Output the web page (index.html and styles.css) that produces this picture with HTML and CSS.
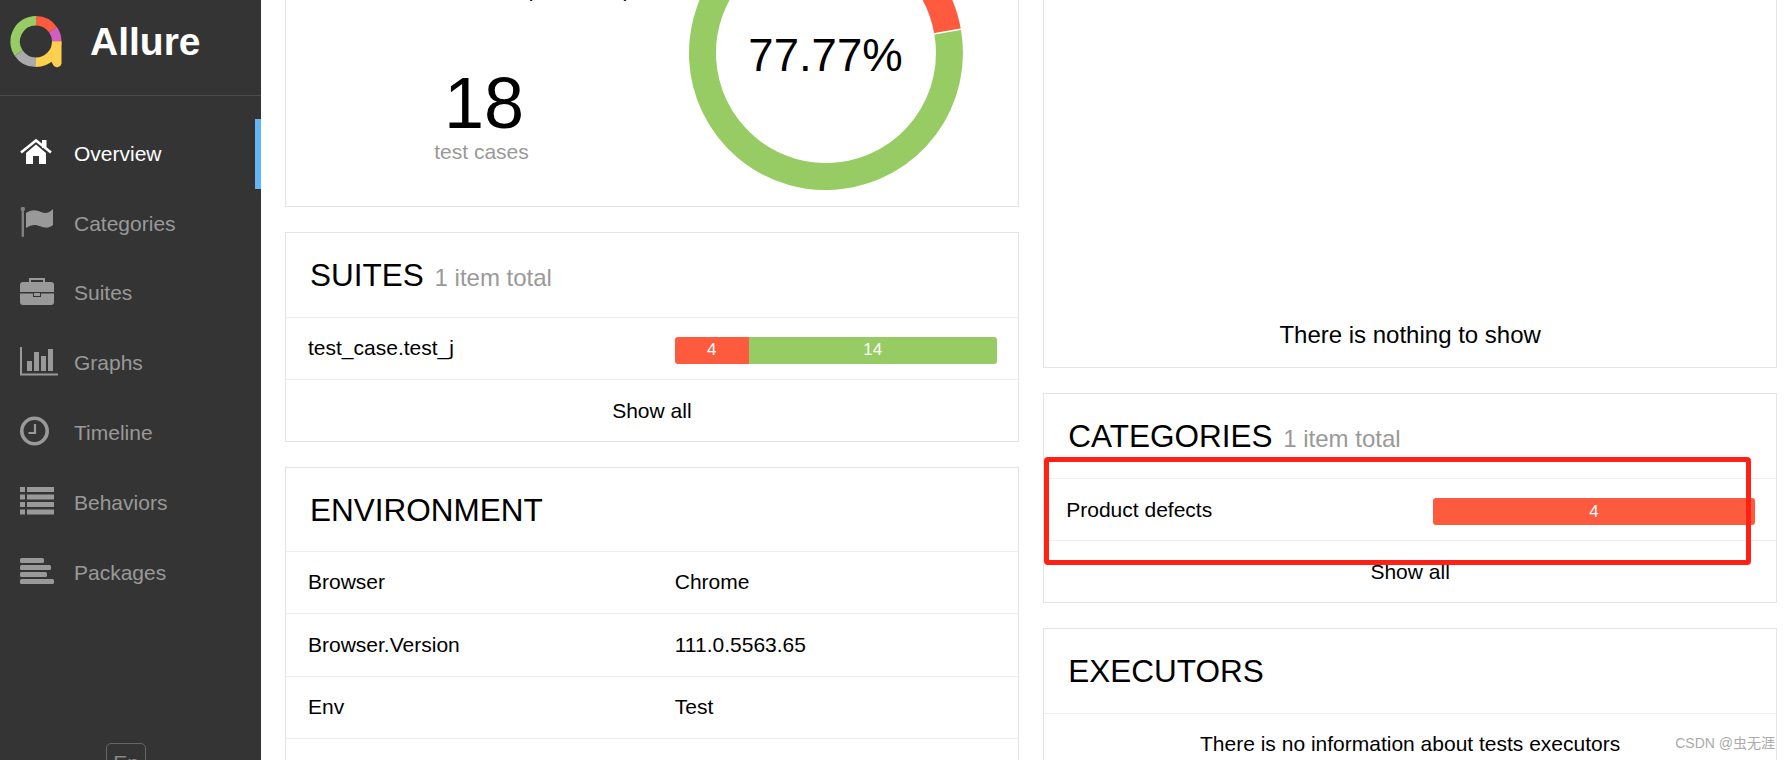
FILE: index.html
```html
<!DOCTYPE html>
<html lang="en">
<head>
    <meta charset="UTF-8">
    <meta name="viewport" content="width=device-width, initial-scale=1.0">
    <title>Allure Report</title>
    <link rel="stylesheet" href="styles.css">
</head>
<body>
    <aside class="sidebar">
        <div class="brand">
            <svg class="brand-logo" width="64" height="64" viewBox="0 0 64 64">
                <g fill="none" stroke-width="9.5">
                    <path d="M31 6.75A20.75 20.75 0 0 1 47.9 15.6" stroke="#fd5a3e"/>
                    <path d="M47.9 15.6A20.75 20.75 0 0 1 51.75 27.5" stroke="#d35ebe"/>
                    <path d="M51.75 27.5A20.75 20.75 0 0 1 31 48.25" stroke="#ffd050"/>
                    <path d="M31 48.25A20.75 20.75 0 0 1 13.6 39" stroke="#aaaaaa"/>
                    <path d="M13.6 39A20.75 20.75 0 0 1 31 6.75" stroke="#97cc64"/>
                </g>
                <path d="M47 27.5H56.5V49.5A4.5 4.5 0 0 1 48.5 51.5L46 47Z" fill="#ffd050"/>
            </svg>
            <span class="brand-name">Allure</span>
        </div>
        <nav class="nav">
            <a class="nav-item active" href="#">
                <svg class="nav-icon" width="34" height="28" viewBox="0 0 34 28">
                    <path d="M6 15L16 6.5L26 15V26H19V18H13V26H6Z" fill="currentColor"/>
                    <path d="M1 14.5L16 2.5L31 14.5" fill="none" stroke="currentColor" stroke-width="2.6"/>
                    <rect x="22" y="2" width="4.5" height="8" fill="currentColor"/>
                </svg>
                <span>Overview</span>
            </a>
            <a class="nav-item" href="#">
                <svg class="nav-icon" width="34" height="30" viewBox="0 0 34 30">
                    <rect x="1.6" y="1" width="2.4" height="29" rx="1" fill="#808080"/>
                    <circle cx="2.8" cy="2" r="2.2" fill="#808080"/>
                    <path d="M6 6C12 2 16 3 21 5C26 7 29 6 33 2V18C29 21 26 21.5 21 19.5C16 17.5 12 17 6 21Z" fill="currentColor"/>
                </svg>
                <span>Categories</span>
            </a>
            <a class="nav-item" href="#">
                <svg class="nav-icon" width="34" height="28" viewBox="0 0 34 28">
                    <path d="M10 6V2H24V6" fill="none" stroke="currentColor" stroke-width="2"/>
                    <path d="M3 5H31A3 3 0 0 1 34 8V15H0V8A3 3 0 0 1 3 5Z" fill="currentColor"/>
                    <path d="M0 16.5H13V20H21V16.5H34V25A3 3 0 0 1 31 28H3A3 3 0 0 1 0 25Z" fill="currentColor"/>
                    <rect x="14" y="16" width="6" height="3" fill="currentColor"/>
                </svg>
                <span>Suites</span>
            </a>
            <a class="nav-item" href="#">
                <svg class="nav-icon" width="38" height="29" viewBox="0 0 38 29">
                    <path d="M0 0H2V26.5H38V28.5H0Z" fill="currentColor"/>
                    <rect x="7" y="14" width="5" height="10" fill="currentColor"/>
                    <rect x="14" y="5" width="5" height="19" fill="currentColor"/>
                    <rect x="21" y="9" width="5" height="15" fill="currentColor"/>
                    <rect x="28" y="2" width="5" height="22" fill="currentColor"/>
                </svg>
                <span>Graphs</span>
            </a>
            <a class="nav-item" href="#">
                <svg class="nav-icon" width="34" height="30" viewBox="0 0 34 30">
                    <circle cx="14.5" cy="15" r="12.7" fill="none" stroke="currentColor" stroke-width="3.6"/>
                    <path d="M15 8V17H8.5" fill="none" stroke="currentColor" stroke-width="2.2"/>
                </svg>
                <span>Timeline</span>
            </a>
            <a class="nav-item" href="#">
                <svg class="nav-icon" width="34" height="28" viewBox="0 0 34 28">
                    <g fill="currentColor">
                        <rect x="0" y="0" width="5" height="5"/>
                        <rect x="7" y="0" width="27" height="5"/>
                        <rect x="0" y="7.5" width="5" height="5"/>
                        <rect x="7" y="7.5" width="27" height="5"/>
                        <rect x="0" y="15" width="5" height="5"/>
                        <rect x="7" y="15" width="27" height="5"/>
                        <rect x="0" y="22.5" width="5" height="5"/>
                        <rect x="7" y="22.5" width="27" height="5"/>
                    </g>
                </svg>
                <span>Behaviors</span>
            </a>
            <a class="nav-item" href="#">
                <svg class="nav-icon" width="34" height="26" viewBox="0 0 34 26">
                    <g fill="currentColor">
                        <rect x="0" y="0" width="24" height="5" rx="1.5"/>
                        <rect x="0" y="7" width="31" height="5" rx="1.5"/>
                        <rect x="0" y="14" width="27" height="5" rx="1.5"/>
                        <rect x="0" y="21" width="34" height="5" rx="1.5"/>
                    </g>
                </svg>
                <span>Packages</span>
            </a>
        </nav>
        <div class="sidebar-foot">
            <button class="lang-btn">En</button>
        </div>
    </aside>

    <main class="main">
        <div class="column">
            <section class="card summary">
                <div class="summary-stats">
                    <div class="summary-time">14:28:05 - 14:28:19 (14s 35ms)</div>
                    <div class="summary-count">18</div>
                    <div class="summary-label">test cases</div>
                </div>
                <svg class="donut" width="276" height="190" viewBox="0 -53 276 190">
                    <g fill="none" stroke-width="27">
                        <path d="M138 -123.5A123.5 123.5 0 0 1 259.6 -21.4" stroke="#fd5a3e"/>
                        <path d="M259.6 -21.4A123.5 123.5 0 1 1 138 -123.5" stroke="#97cc64"/>
                    </g>
                    <path d="M245.3 -18.9L273.9 -24" stroke="#fff" stroke-width="1.5"/>
                    <text class="donut-text" x="137.5" y="18" text-anchor="middle">77.77%</text>
                </svg>
            </section>

            <section class="card">
                <h2 class="card-head">SUITES <small>1 item total</small></h2>
                <div class="row">
                    <span>test_case.test_j</span>
                    <div class="bar">
                        <span class="bar-failed seg-small">4</span>
                        <span class="bar-passed">14</span>
                    </div>
                </div>
                <a class="show-all" href="#">Show all</a>
            </section>

            <section class="card env">
                <h2 class="card-head">ENVIRONMENT</h2>
                <div class="row"><span>Browser</span><span>Chrome</span></div>
                <div class="row"><span>Browser.Version</span><span>111.0.5563.65</span></div>
                <div class="row"><span>Env</span><span>Test</span></div>
                <div class="row"></div>
            </section>
        </div>

        <div class="column">
            <section class="card trend">
                <p class="empty-note">There is nothing to show</p>
            </section>

            <section class="card">
                <h2 class="card-head">CATEGORIES <small>1 item total</small></h2>
                <div class="row">
                    <span>Product defects</span>
                    <div class="bar">
                        <span class="bar-failed">4</span>
                    </div>
                </div>
                <a class="show-all" href="#">Show all</a>
            </section>

            <section class="card">
                <h2 class="card-head">EXECUTORS</h2>
                <p class="row-note">There is no information about tests executors</p>
            </section>
        </div>
    </main>

    <div class="annotation"></div>
    <div class="watermark">CSDN @虫无涯</div>
</body>
</html>
```

FILE: styles.css
```css
html, body {
    height: 100%;
}

body {
    font-family: "Liberation Sans", Arial, sans-serif;
    font-size: 21px;
    margin: 0;
    height: 760px;
    overflow: hidden;
    display: flex;
    background: #fff;
    color: #000;
}

/* sidebar */
.sidebar {
    width: 261px;
    flex-shrink: 0;
    height: 760px;
    background: #343434;
    display: flex;
    flex-direction: column;
}

.brand {
    height: 96px;
    box-sizing: border-box;
    border-bottom: 1px solid #4a4a4a;
    display: flex;
    align-items: flex-start;
    padding: 14px 0 0 5px;
}

.brand-logo {
    flex-shrink: 0;
}

.brand-name {
    margin: 6px 0 0 21px;
    font-size: 39px;
    font-weight: bold;
    color: #fff;
}

.nav {
    flex: 1;
    padding-top: 23px;
}

.nav-item {
    height: 69.8px;
    box-sizing: border-box;
    display: flex;
    align-items: center;
    padding-left: 20px;
    color: #999;
    text-decoration: none;
}

.nav-item span {
    position: absolute;
    left: 74px;
}

.nav-item.active {
    color: #fff;
    border-right: 6px solid #64b5f6;
}

.nav-icon {
    margin-top: -4px;
}

.sidebar-foot {
    height: 17px;
    overflow: hidden;
    padding-left: 106px;
}

.lang-btn {
    width: 40px;
    height: 40px;
    padding: 0;
    font-family: inherit;
    font-size: 21px;
    color: #888;
    background: transparent;
    border: 1px solid #666;
    border-radius: 5px;
}

/* main */
.main {
    flex: 1;
    display: flex;
    gap: 24.5px;
    padding: 0 13px 0 24px;
    min-width: 0;
}

.column {
    flex: 1;
    min-width: 0;
}

.card {
    border: 1px solid #e4e4e4;
    margin-bottom: 25px;
}

.card-head {
    height: 84px;
    box-sizing: border-box;
    margin: 0;
    padding: 24px 0 0 24px;
    font-size: 31.5px;
    font-weight: normal;
    line-height: 36px;
}

.env .card-head {
    height: 83px;
}

.env .row {
    height: 62.6px;
}

.card-head small {
    margin-left: 2px;
    font-size: 24px;
    color: #999;
}

.row {
    height: 62px;
    box-sizing: border-box;
    border-top: 1px solid #eceef1;
    display: grid;
    grid-template-columns: 1fr 322px;
    align-items: center;
    padding: 0 21px 0 22px;
}

.bar {
    display: flex;
    height: 27px;
    margin-top: 4px;
    border-radius: 3px;
    overflow: hidden;
    font-size: 17px;
    color: #fff;
}

.bar span {
    display: flex;
    align-items: center;
    justify-content: center;
}

.bar-failed {
    flex: 1;
    background: #fd5a3e;
}

.bar-failed.seg-small {
    flex: 0 0 74px;
}

.bar-passed {
    flex: 1;
    background: #97cc64;
}

.show-all {
    display: block;
    height: 62px;
    line-height: 62px;
    border-top: 1px solid #eceef1;
    box-sizing: border-box;
    text-align: center;
    color: #000;
    text-decoration: none;
}

.row-note {
    margin: 0;
    padding: 18px 0 40px;
    border-top: 1px solid #eceef1;
    text-align: center;
}

/* top cards, their top edge is scrolled away */
.summary {
    height: 206.5px;
    box-sizing: border-box;
    border-top: 0;
    display: flex;
    justify-content: space-between;
    align-items: flex-end;
    overflow: hidden;
}

.summary-stats {
    width: 390px;
    text-align: center;
    padding: 0 0 41.5px 3px;
}

.summary-time {
    white-space: nowrap;
    line-height: 24px;
    margin-bottom: 65px;
}

.summary-count {
    font-size: 72px;
    line-height: 72px;
}

.summary-label {
    color: #999;
    line-height: 24px;
    margin-top: 1.5px;
    padding-right: 5px;
}

.donut {
    align-self: flex-start;
    margin-right: 54px;
}

.donut-text {
    font-size: 45.5px;
}

.trend {
    height: 368px;
    box-sizing: border-box;
    border-top: 0;
    display: flex;
    align-items: flex-end;
    justify-content: center;
}

.empty-note {
    margin: 0 0 18px;
    font-size: 24px;
}

/* drawn over the screenshot */
.annotation {
    position: absolute;
    left: 1044px;
    top: 457px;
    width: 707px;
    height: 108px;
    box-sizing: border-box;
    border: 5px solid #ff2016;
    border-radius: 4px;
}

.watermark {
    position: absolute;
    right: 15px;
    bottom: 8px;
    font-family: "Liberation Sans", "Noto Sans CJK SC", sans-serif;
    font-size: 14px;
    color: #aaa;
}
```
